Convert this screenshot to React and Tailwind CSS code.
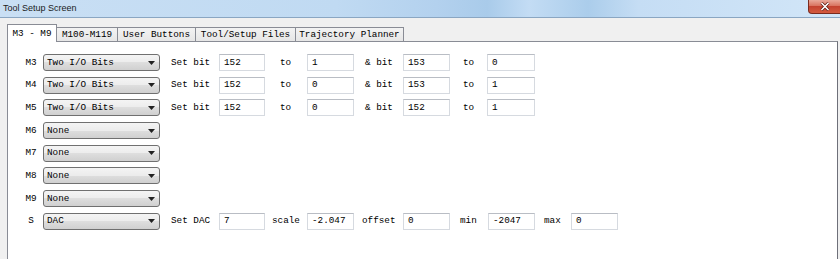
import React from 'react';

const mono = "font-['Liberation_Mono','Courier_New',monospace] text-[9.3px] text-black";

const tabs = [
  { name: 'M3 - M9', w: 'w-[50px]', active: true },
  { name: 'M100-M119', w: 'w-[61px]' },
  { name: 'User Buttons', w: 'w-[78px]' },
  { name: 'Tool/Setup Files', w: 'w-[100px]' },
  { name: 'Trajectory Planner', w: 'w-[108px]' },
];

const Field = ({ value, w = 'w-[47px]' }) => (
  <div
    className={`${w} h-[17px] flex items-center pl-[4px] bg-white border border-[#d6dae0] border-t-[#b9bdc4] ${mono}`}
  >
    {value}
  </div>
);

const Combo = ({ value }) => (
  <div className="w-[117px] h-[17px] flex items-center justify-between pl-[3px] pr-[3px] rounded-[3px] border border-[#707070] bg-[linear-gradient(#f4f4f4,#ececec_50%,#dedede_50%,#d0d0d0)]">
    <span className={mono}>{value}</span>
    <svg width="7" height="4" viewBox="0 0 7 4" className="mr-[1px]">
      <path d="M0 0h7L3.5 4z" fill="#222" />
    </svg>
  </div>
);

// a text label in a fixed-width cell between two fields
const Cell = ({ text, w, pl }) => (
  <div className={`${w} ${pl} ${mono} whitespace-pre`}>{text}</div>
);

const rows = [
  { m: 'M3', type: 'Two I/O Bits', v: ['152', '1', '153', '0'] },
  { m: 'M4', type: 'Two I/O Bits', v: ['152', '0', '153', '1'] },
  { m: 'M5', type: 'Two I/O Bits', v: ['152', '0', '152', '1'] },
  { m: 'M6', type: 'None' },
  { m: 'M7', type: 'None' },
  { m: 'M8', type: 'None' },
  { m: 'M9', type: 'None' },
];

export default function App() {
  return (
    <div className="w-[840px] h-[259px] overflow-hidden bg-[#f0f0f0] font-['Liberation_Sans',Arial,sans-serif]">
      {/* title bar */}
      <div className="h-[18px] flex items-start justify-between border-b border-[#8aa6c2] bg-[linear-gradient(to_right,#c9dff4_0%,#c0daf2_40%,#b3d1ee_52%,#a9cbea_58%,#c3dcf4_63%,#abcdeb_70%,#c5ddf4_76%,#d2e6f8_100%)]">
        <span className="pl-[3px] pt-[2px] text-[9px] leading-[12px] text-[#1b1b1b]">Tool Setup Screen</span>
        <div className="w-[40px] h-[14px] mr-[-8px] rounded-bl-[4px] border border-[#7a2b1f] border-t-0 flex items-center justify-center bg-[linear-gradient(#e9a99a,#d9735f_45%,#c44330_50%,#d45a3f)]">
          <svg width="10" height="9" viewBox="0 0 10 9" className="mr-[6px]">
            <path d="M1.5 1l7 7M8.5 1l-7 7" stroke="#5a1a10" strokeWidth="3" />
            <path d="M1.5 1l7 7M8.5 1l-7 7" stroke="#fff" strokeWidth="1.6" />
          </svg>
        </div>
      </div>

      {/* tab control */}
      <div className="pt-[6px] pl-[7px] pr-[2px]">
        <div className="flex items-end h-[17px]">
          {tabs.map((t) =>
            t.active ? (
              <div
                key={t.name}
                className={`${t.w} h-[18px] relative z-10 -mb-[1px] bg-white border border-b-0 border-[#898c95] flex justify-center pt-[2px] ${mono}`}
              >
                {t.name}
              </div>
            ) : (
              <div
                key={t.name}
                className={`${t.w} h-[14px] border border-l-0 border-b-0 border-[#898c95] bg-[linear-gradient(#f3f3f3,#e6e6e6)] flex justify-center items-center ${mono}`}
              >
                {t.name}
              </div>
            )
          )}
        </div>
        <div className="h-[240px] bg-white border border-[#898c95] border-r-[#6e7079] pt-[12px] pl-[12px] flex flex-col gap-[5.7px]">
          {rows.map((r) => (
            <div key={r.m} className="flex items-center h-[17px]">
              <div className={`w-[22px] text-center ${mono}`}>{r.m}</div>
              <div className="ml-[1px]">
                <Combo value={r.type} />
              </div>
              {r.v && (
                <>
                  <Cell text="Set bit" w="w-[59px]" pl="pl-[11px]" />
                  <Field value={r.v[0]} w="w-[46px]" />
                  <Cell text="to" w="w-[42px]" pl="pl-[15px]" />
                  <Field value={r.v[1]} />
                  <Cell text="& bit" w="w-[49px]" pl="pl-[11px]" />
                  <Field value={r.v[2]} />
                  <Cell text="to" w="w-[37px]" pl="pl-[13px]" />
                  <Field value={r.v[3]} w="w-[48px]" />
                </>
              )}
            </div>
          ))}
          <div className="flex items-center h-[17px]">
            <div className={`w-[22px] text-center ${mono}`}>S</div>
            <div className="ml-[1px]">
              <Combo value="DAC" />
            </div>
            <Cell text="Set DAC" w="w-[59px]" pl="pl-[11px]" />
            <Field value="7" w="w-[46px]" />
            <Cell text="scale" w="w-[42px]" pl="pl-[7px]" />
            <Field value="-2.047" />
            <Cell text="offset" w="w-[49px]" pl="pl-[8px]" />
            <Field value="0" />
            <Cell text="min" w="w-[38px]" pl="pl-[10px]" />
            <Field value="-2047" />
            <Cell text="max" w="w-[36px]" pl="pl-[9px]" />
            <Field value="0" />
          </div>
        </div>
      </div>
    </div>
  );
}
